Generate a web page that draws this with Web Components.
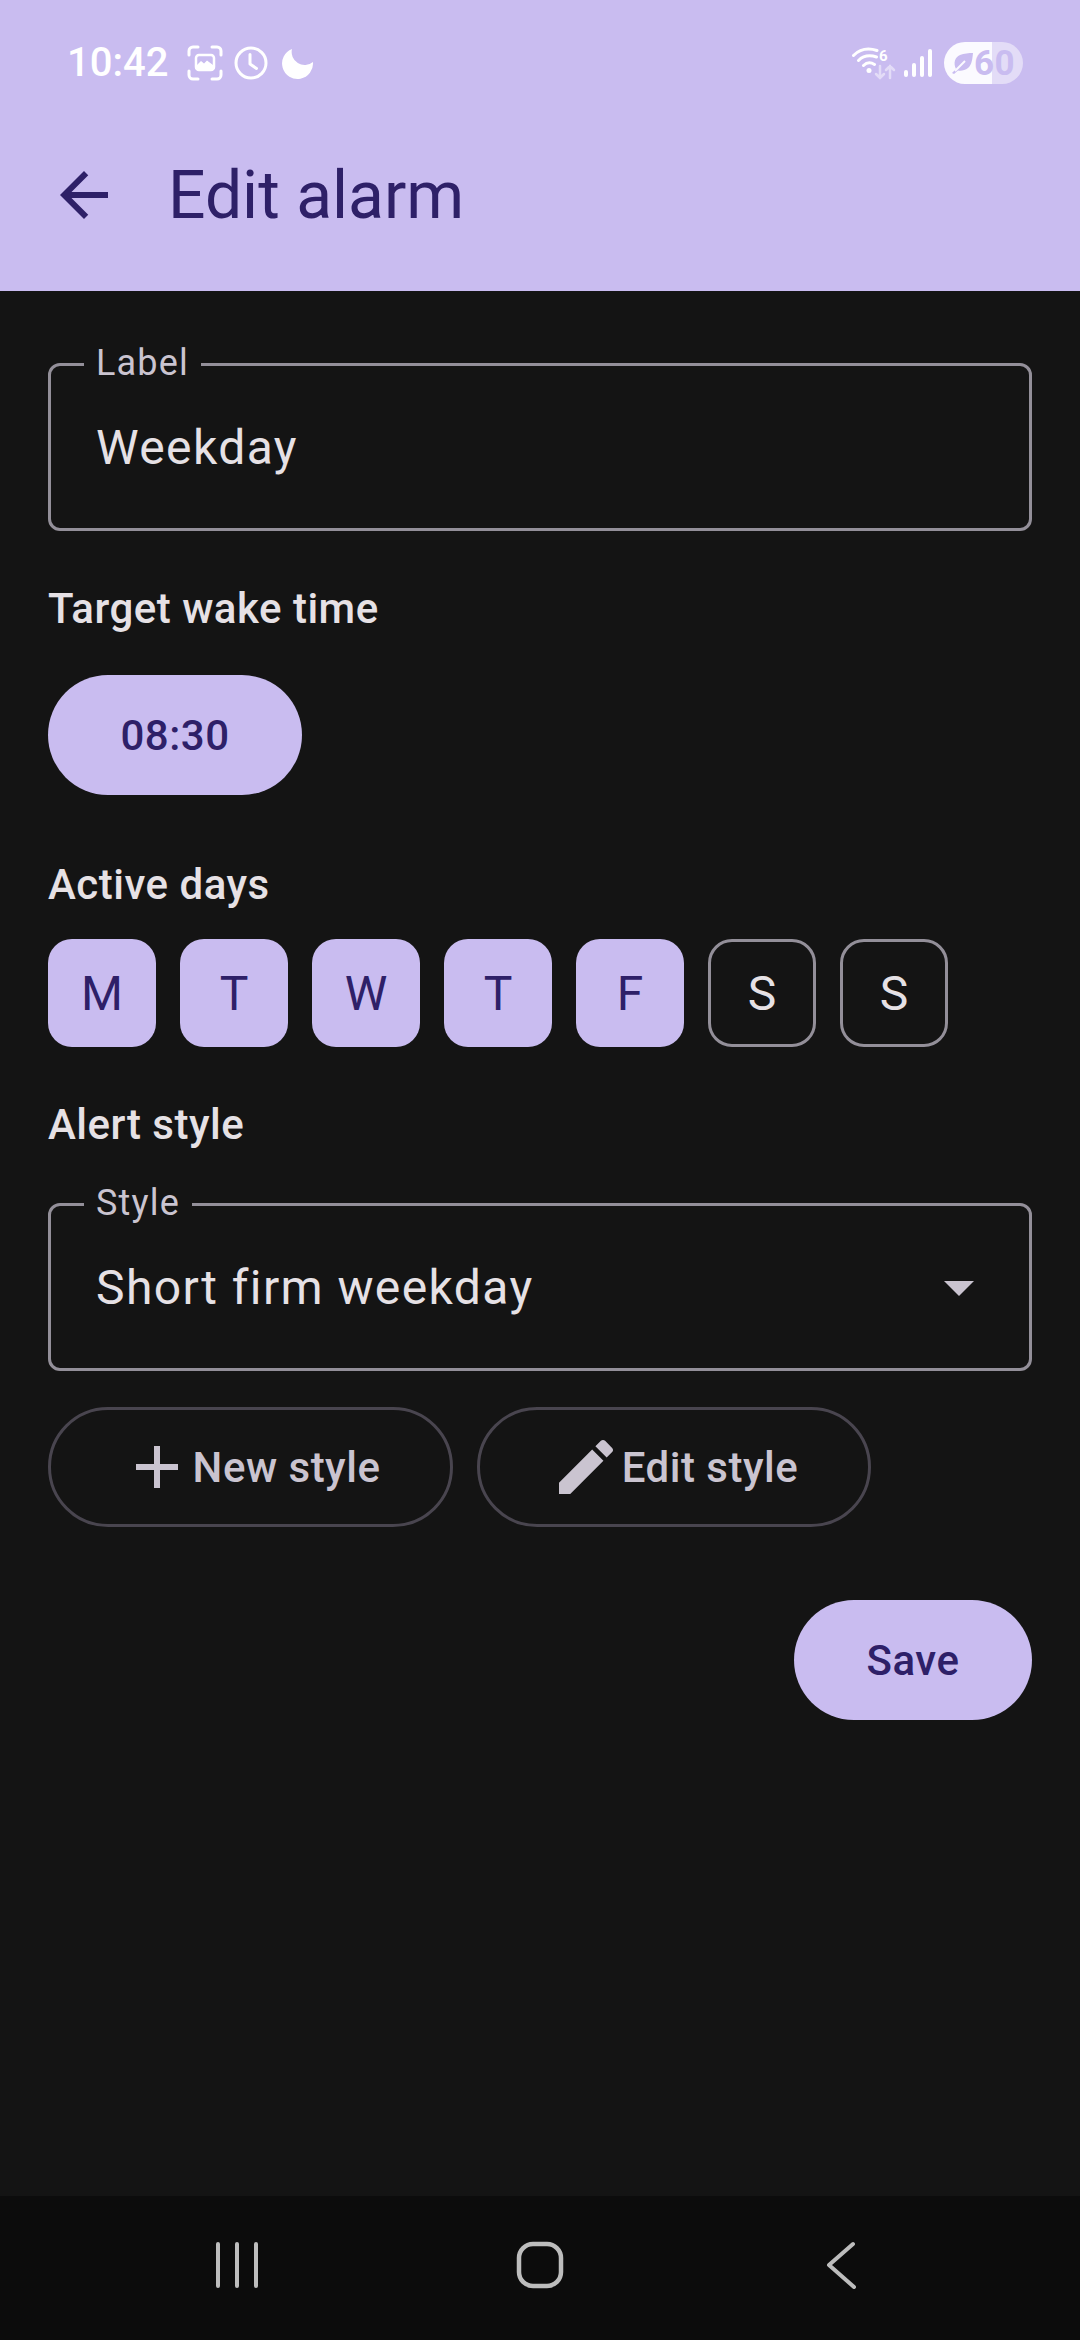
<!DOCTYPE html>
<html lang="en">
<head>
<meta charset="utf-8">
<title>Edit alarm</title>
<style>
  html, body { margin: 0; padding: 0; background: #141414; }
  body { font-family: Roboto, "Noto Sans", sans-serif; }
</style>
</head>
<body>
<alarm-screen></alarm-screen>
<script>
class StatusBar extends HTMLElement {
  connectedCallback() {
    this.attachShadow({ mode: 'open' });
    this.shadowRoot.innerHTML = `
      <style>
        :host {
          display: flex;
          align-items: center;
          height: 125px;
          padding: 0 57px 0 67px;
          color: #fff;
        }
        .time { font-size: 40px; font-weight: 500; width: 120px; }
        .left { display: flex; align-items: center; gap: 11px; }
        .right { margin-left: auto; display: flex; align-items: center; gap: 12px; }
        .wifi { margin-right: -4px; }
        svg { display: block; }
        .battery {
          position: relative;
          display: flex;
          align-items: center;
          width: 79px;
          height: 42px;
          border-radius: 21px;
          overflow: hidden;
          background: linear-gradient(90deg, #fbfaff 0 48px, #e3dcf7 48px);
          color: #c9bcf0;
          font-size: 35px;
          font-weight: 700;
        }
        .battery span { position: absolute; left: 30px; top: 1px; letter-spacing: 0.5px; }
      </style>
      <div class="time">10:42</div>
      <div class="left">
        <svg width="36" height="36" viewBox="0 0 36 36" fill="none" stroke="#fff" stroke-width="3" stroke-linecap="round">
          <path d="M2 10V6a4 4 0 0 1 4-4h5M25 2h5a4 4 0 0 1 4 4v4M34 26v4a4 4 0 0 1-4 4h-5M11 34H6a4 4 0 0 1-4-4v-4"/>
          <rect x="9" y="10" width="18" height="15" rx="3" stroke-width="2.5"/>
          <path d="M10 20l4-4 3 2.500 3-3 6 4.500v4.500H10z" fill="#fff" stroke="none"/>
        </svg>
        <svg width="34" height="34" viewBox="0 0 34 34" fill="none" stroke="#fff" stroke-width="3" stroke-linecap="round" stroke-linejoin="round">
          <circle cx="17" cy="17" r="15"/>
          <path d="M16 8.500v9.500l6.500 4.500"/>
        </svg>
        <svg style="margin-left:3px" width="32" height="32" viewBox="0 0 32 32">
          <path d="M10 2A15.500 15.500 0 1 0 31 15 13 13 0 0 1 10 2z" fill="#fff"/>
        </svg>
      </div>
      <div class="right">
        <svg class="wifi" width="44" height="36" viewBox="0 0 44 36" fill="none" stroke="#fff" stroke-width="3" stroke-linecap="round">
          <path d="M1.500 10.500C7 5 14 2 25 5.500M6.500 15.500C10 12 15 9 24.500 12M11.500 20.500C14 18 18 16.500 22.500 19.500"/>
          <circle cx="17" cy="25.500" r="2.500" fill="#fff" stroke="none"/>
          <text x="27" y="16" font-family="Roboto, sans-serif" font-size="15" font-weight="700" fill="#fff" stroke="none">6</text>
          <path d="M28 21v12m-4-4l4 4 4-4M38 33V21m-4 4l4-4 4 4" stroke="#e3dcf7" stroke-width="2.500"/>
        </svg>
        <svg width="28" height="30" viewBox="0 0 28 30" fill="#fff">
          <rect x="0" y="22" width="4" height="7" rx="2"/>
          <rect x="8" y="15" width="4" height="14" rx="2"/>
          <rect x="16" y="8" width="4" height="21" rx="2"/>
          <rect x="24" y="1" width="4" height="28" rx="2"/>
        </svg>
        <div class="battery">
          <svg style="margin-left:6px" width="24" height="24" viewBox="0 0 24 24">
            <path d="M2 22l4-4C3 12 5 6 10 4c4-1.500 9-2 13-2-.5 5-1 12-5 15-3 2.500-7 3-10 2.500L4 23z" fill="#c9bcf0"/>
            <path d="M5 20L15 10" stroke="#fbfaff" stroke-width="2"/>
          </svg>
          <span>60</span>
        </div>
      </div>
    `;
  }
}
customElements.define('status-bar', StatusBar);

class AppBar extends HTMLElement {
  connectedCallback() {
    this.attachShadow({ mode: 'open' });
    this.shadowRoot.innerHTML = `
      <style>
        :host {
          display: block;
          height: 291px;
          background: #c9bcf0;
          color: #2e2068;
        }
        .toolbar {
          display: flex;
          align-items: center;
          height: 140px;
          padding-left: 48px;
          gap: 48px;
        }
        svg { display: block; }
        .title { font-size: 66px; font-weight: 400; }
      </style>
      <status-bar></status-bar>
      <div class="toolbar">
        <svg width="72" height="72" viewBox="0 0 24 24" fill="#2e2068">
          <path d="M20 11H7.830l5.590-5.590L12 4l-8 8 8 8 1.410-1.410L7.830 13H20v-2z"/>
        </svg>
        <div class="title"><slot></slot></div>
      </div>
    `;
  }
}
customElements.define('app-bar', AppBar);

class OutlinedField extends HTMLElement {
  connectedCallback() {
    this.attachShadow({ mode: 'open' });
    this.shadowRoot.innerHTML = `
      <style>
        :host {
          display: flex;
          position: relative;
          align-items: center;
          box-sizing: border-box;
          height: 168px;
          padding: 0 34px 0 45px;
          border: 3px solid #938f99;
          border-radius: 12px;
          color: #e6e1e5;
          font-size: 48px;
          letter-spacing: 1.4px;
        }
        .label {
          position: absolute;
          left: 33px;
          top: -24px;
          padding: 0 12px;
          background: #141414;
          color: #cac4d0;
          font-size: 36px;
          line-height: 42px;
          letter-spacing: 1.2px;
        }
        .value { flex: 1; }
        svg { display: block; }
      </style>
      <span class="label">${this.getAttribute('label')}</span>
      <div class="value"><slot></slot></div>
      ${this.hasAttribute('dropdown') ? `
        <svg width="72" height="72" viewBox="0 0 24 24" fill="#cac4d0"><path d="M7 10l5 5 5-5z"/></svg>
      ` : ''}
    `;
  }
}
customElements.define('outlined-field', OutlinedField);

class SectionLabel extends HTMLElement {
  connectedCallback() {
    this.attachShadow({ mode: 'open' });
    this.shadowRoot.innerHTML = `
      <style>
        :host {
          display: block;
          color: #e6e1e5;
          font-size: 42px;
          font-weight: 500;
          line-height: 54px;
          letter-spacing: 0.5px;
        }
      </style>
      <slot></slot>
    `;
  }
}
customElements.define('section-label', SectionLabel);

class PillButton extends HTMLElement {
  connectedCallback() {
    const outlined = this.hasAttribute('outlined');
    this.attachShadow({ mode: 'open' });
    this.shadowRoot.innerHTML = `
      <style>
        :host {
          display: inline-flex;
          align-items: center;
          justify-content: center;
          box-sizing: border-box;
          height: 120px;
          border-radius: 60px;
          font-size: 42px;
          font-weight: 500;
          letter-spacing: 0.5px;
          background: ${outlined ? 'transparent' : '#c9bcf0'};
          color: ${outlined ? '#cac4d0' : '#2e2068'};
          border: ${outlined ? '3px solid #49454f' : 'none'};
        }
        ::slotted(svg) { display: block; fill: #cac4d0; }
      </style>
      <slot name="icon"></slot>
      <slot></slot>
    `;
  }
}
customElements.define('pill-button', PillButton);

class DayChip extends HTMLElement {
  connectedCallback() {
    const on = this.hasAttribute('selected');
    this.attachShadow({ mode: 'open' });
    this.shadowRoot.innerHTML = `
      <style>
        :host {
          display: flex;
          align-items: center;
          justify-content: center;
          box-sizing: border-box;
          width: 108px;
          height: 108px;
          border-radius: 24px;
          font-size: 48px;
          background: ${on ? '#c9bcf0' : 'transparent'};
          color: ${on ? '#2e2068' : '#e6e1e5'};
          border: ${on ? 'none' : '3px solid #938f99'};
        }
      </style>
      <slot></slot>
    `;
  }
}
customElements.define('day-chip', DayChip);

class NavBar extends HTMLElement {
  connectedCallback() {
    this.attachShadow({ mode: 'open' });
    this.shadowRoot.innerHTML = `
      <style>
        :host {
          display: flex;
          align-items: center;
          justify-content: space-between;
          box-sizing: border-box;
          height: 144px;
          padding: 0 222px 6px 216px;
          background: #0c0c0c;
        }
        svg { display: block; }
        .home { margin-right: 7px; }
      </style>
      <svg width="44" height="48" viewBox="0 0 44 48" fill="none" stroke="#bdbdbd" stroke-width="4" stroke-linecap="round">
        <path d="M2 3v42M21 3v42M40 3v42"/>
      </svg>
      <svg class="home" width="48" height="48" viewBox="0 0 48 48" fill="none" stroke="#bdbdbd" stroke-width="4.500">
        <rect x="3" y="3" width="42" height="42" rx="14"/>
      </svg>
      <svg width="32" height="48" viewBox="0 0 32 48" fill="none" stroke="#bdbdbd" stroke-width="4" stroke-linecap="round" stroke-linejoin="round">
        <path d="M27 3L3 24 28 46"/>
      </svg>
    `;
  }
}
customElements.define('nav-bar', NavBar);

class AlarmScreen extends HTMLElement {
  connectedCallback() {
    this.attachShadow({ mode: 'open' });
    this.shadowRoot.innerHTML = `
      <style>
        :host {
          display: flex;
          flex-direction: column;
          height: 2340px;
          background: #141414;
          font-family: Roboto, "Noto Sans", sans-serif;
        }
        .form {
          flex: 1;
          display: flex;
          flex-direction: column;
          align-items: stretch;
          padding: 72px 48px 0;
        }
        .target { margin-top: 51px; }
        .time { align-self: flex-start; margin-top: 39px; width: 254px; }
        .active { margin-top: 63px; }
        .days { display: flex; gap: 24px; margin-top: 27px; }
        .alert { margin-top: 51px; }
        .style { margin-top: 51px; }
        .actions { display: flex; gap: 24px; margin-top: 36px; }
        .new { width: 405px; }
        .edit { width: 394px; }
        .save { align-self: flex-end; margin-top: 73px; width: 238px; }
      </style>
      <app-bar>Edit alarm</app-bar>
      <div class="form">
        <outlined-field label="Label">Weekday</outlined-field>
        <section-label class="target">Target wake time</section-label>
        <pill-button class="time">08:30</pill-button>
        <section-label class="active">Active days</section-label>
        <div class="days">
          <day-chip selected>M</day-chip>
          <day-chip selected>T</day-chip>
          <day-chip selected>W</day-chip>
          <day-chip selected>T</day-chip>
          <day-chip selected>F</day-chip>
          <day-chip>S</day-chip>
          <day-chip>S</day-chip>
        </div>
        <section-label class="alert">Alert style</section-label>
        <outlined-field class="style" label="Style" dropdown>Short firm weekday</outlined-field>
        <div class="actions">
          <pill-button class="new" outlined>
            <svg slot="icon" width="72" height="72" viewBox="0 0 24 24"><path d="M19 13h-6v6h-2v-6H5v-2h6V5h2v6h6v2z"/></svg>
            New style
          </pill-button>
          <pill-button class="edit" outlined>
            <svg slot="icon" width="72" height="72" viewBox="0 0 24 24"><path d="M3 17.250V21h3.750L17.810 9.940l-3.750-3.750L3 17.250zM20.710 7.040c.39-.39.39-1.020 0-1.410l-2.340-2.340c-.39-.39-1.020-.39-1.410 0l-1.830 1.830 3.750 3.750 1.830-1.830z"/></svg>
            Edit style
          </pill-button>
        </div>
        <pill-button class="save">Save</pill-button>
      </div>
      <nav-bar></nav-bar>
    `;
  }
}
customElements.define('alarm-screen', AlarmScreen);
</script>
</body>
</html>
